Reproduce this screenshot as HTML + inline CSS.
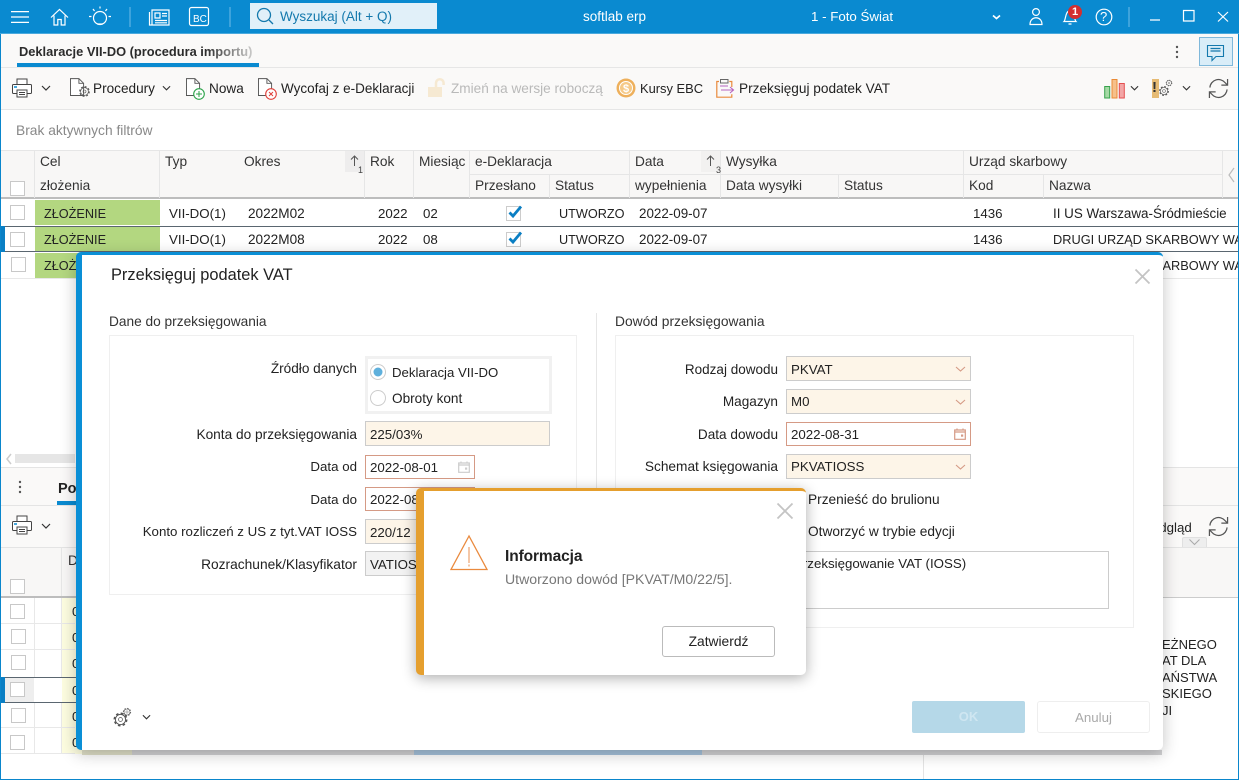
<!DOCTYPE html>
<html lang="pl"><head><meta charset="utf-8"><title>softlab erp</title>
<style>
html,body{margin:0;padding:0;width:1239px;height:780px;overflow:hidden;background:#fff}
body{font-family:"Liberation Sans",Arial,sans-serif;font-size:13.3px;color:#222;position:relative}
.t{position:absolute;white-space:nowrap;line-height:16px;margin-top:1px}
.r{position:absolute;white-space:nowrap;line-height:16px;text-align:right;margin-top:1px;font-size:13.6px}
.m{font-size:13.6px}
.b{position:absolute;box-sizing:border-box}
svg{position:absolute;overflow:visible}
.h{color:#333;font-size:13.7px}
.cb{position:absolute;box-sizing:border-box;width:15px;height:15px;background:#fff;border:1px solid #c8c8c8}
.f{position:absolute;box-sizing:border-box;background:#fdf5e8;border:1px solid #ccc;line-height:23px;padding-left:4px;white-space:nowrap}
.d{background:#fff;border-color:#d59a85}
</style></head><body>
<svg width="0" height="0" style="position:absolute"><defs>
<symbol id="chev" viewBox="0 0 10 6"><path d="M1 1l4 4 4-4" fill="none" stroke="#333" stroke-width="1.2"/></symbol>
<symbol id="printer" viewBox="0 0 20 20"><path d="M5 7V1h10v6" fill="#fff" stroke="#444"/><rect x=".5" y="6.500" width="19" height="9" rx="1" fill="#fff" stroke="#444"/><path d="M2 9h3" stroke="#0a8ad0" stroke-width="1.500"/><path d="M5 12v7h10v-7z" fill="#fff" stroke="#444"/><path d="M7 14.500h6M7 16.500h6" stroke="#444"/></symbol>
<symbol id="doc" viewBox="0 0 16 20"><path d="M.5.500h9l5 5v13H.5z" fill="#fff" stroke="#555"/><path d="M9.500.500v5h5" fill="none" stroke="#555"/></symbol>
<symbol id="gear" viewBox="0 0 20 20"><circle cx="10" cy="10" r="6" fill="none" stroke="#555" stroke-width="1.100"/><circle cx="10" cy="10" r="2.300" fill="none" stroke="#555" stroke-width=".9"/><circle cx="10" cy="10" r="7.300" fill="none" stroke="#555" stroke-width="1.800" stroke-dasharray="3 2.730"/></symbol>
<symbol id="sync" viewBox="0 0 22 22"><path d="M2 10a9 9 0 0 1 16-5l2 2M20 12a9 9 0 0 1-16 5l-2-2" fill="none" stroke="#555" stroke-width="1.300"/><path d="M20.500 1v6.500H14M1.500 21v-6.500H8" fill="none" stroke="#555" stroke-width="1.300"/></symbol>
<symbol id="cal" viewBox="0 0 12 12"><path d="M.7 2h10.600v9.300H.7zM.7 4h10.600M3 .5V2M9 .5V2" fill="none" stroke="currentColor" stroke-width="1.200"/><rect x="7" y="6.500" width="2.200" height="2.200" fill="currentColor"/></symbol>
</defs></svg>

<!-- window frame background -->
<div class="b" style="left:0;top:0;width:1239px;height:780px;border:1px solid #0a86cc;border-top:0"></div>

<!-- top bar -->
<div class="b" style="left:0;top:0;width:1239px;height:34px;background:#0a8ad0"></div>
<div class="b" style="left:0;top:33px;width:1239px;height:1px;background:#4aa9dd"></div>
<svg style="left:0;top:0" width="1239" height="34" fill="none" stroke="#fff" stroke-width="1.200">
<path d="M11 11.600h18M11 17h18M11 22.400h18"/>
<path d="M51 17.500l8.500-8 8.500 8M54 15.500v9.500h3.800v-5.500h3.400v5.500h3.800v-9.500"/>
<circle cx="100" cy="18" r="6.500"/><path d="M97 24h6M89 16.500h2.500M108.500 16.500h2.500M93 9l1.500 2M107 9l-1.500 2M100 6.500v2" />
<path d="M130 7v20M230 7v20" stroke="#3da3dc" stroke-width="2"/>
<path d="M152 10h17v15h-17zM149.500 12v13h3"/><path d="M155 13h5v5h-5zM162 13.500h5M162 16h5M155 20.500h12M155 22.800h12"/>
<rect x="189.500" y="7.500" width="19" height="18" rx="2"/>
<path d="M993 15.500l3.500 3 3.500-3" stroke-width="1.700"/>
<circle cx="1036" cy="12" r="3.400"/><path d="M1030 24.500c0-9 12-9 12 0z"/>
<path d="M1064 21.500c2-2 1-10 6-11 5 1 4 9 6 11zM1068.500 24h3"/>
<circle cx="1104" cy="17" r="7.800"/>
<path d="M1129 7v20" stroke="#3da3dc" stroke-width="2"/>
<path d="M1150 20h10M1183.500 10.500h10.500v10.500h-10.500zM1218 12l10 9.500M1228 12l-10 9.500"/>
</svg>
<div class="t" style="left:1100px;top:8px;color:#fff;font-size:13px">?</div>
<div class="t" style="left:193px;top:11px;color:#fff;font-size:10px">BC</div>
<div class="b" style="left:250px;top:3px;width:187px;height:26px;background:#e1f0f9"></div>
<svg style="left:0;top:0" width="300" height="34" fill="none" stroke="#1479ad" stroke-width="1.300"><circle cx="264" cy="15" r="6.500"/><path d="M269 20l4 4"/></svg>
<div class="t" style="left:280px;top:8px;color:#1479ad;font-size:13.500px">Wyszukaj (Alt + Q)</div>
<div class="t" style="left:583px;top:8px;color:#fff;font-size:13.500px">softlab erp</div>
<div class="t" style="left:811px;top:8px;color:#fff;font-size:13.300px">1 - Foto Świat</div>
<div class="b" style="left:1068px;top:5px;width:14px;height:14px;border-radius:50%;background:#d32f2f;color:#fff;font-weight:bold;font-size:11px;line-height:14px;text-align:center">1</div>

<!-- tab bar -->
<div class="b" style="left:1px;top:34px;width:1237px;height:76px;background:#faf9f8"></div>
<div class="t" style="left:19px;top:43px;width:240px;overflow:hidden;font-weight:bold;font-size:12.850px;color:#2b2b2b">Deklaracje VII-DO (procedura importu)</div>
<div class="b" style="left:205px;top:40px;width:55px;height:22px;background:linear-gradient(90deg,rgba(250,249,248,0),rgba(250,249,248,.85) 95%)"></div>
<div class="b" style="left:17px;top:63px;width:242px;height:4px;background:#0a8ad0"></div>
<div class="b" style="left:1px;top:67px;width:1237px;height:1px;background:#e6e6e6"></div>
<svg style="left:1172px;top:44px" width="10" height="16" fill="#555"><circle cx="5" cy="3" r="1.200"/><circle cx="5" cy="8" r="1.200"/><circle cx="5" cy="13" r="1.200"/></svg>
<div class="b" style="left:1199px;top:37px;width:34px;height:29px;background:#d9edf8;border:1px solid #7fb8da"></div>
<svg style="left:1207px;top:45px" width="18" height="17" fill="none" stroke="#1479ad" stroke-width="1.100"><path d="M.5.500h16v11H9l-4 4v-4H.5z"/><path d="M3.500 3.500h10M3.500 6h10" stroke-width="1.300"/></svg>

<!-- toolbar -->
<svg style="left:12px;top:78px" width="20" height="20"><use href="#printer"/></svg>
<svg style="left:41px;top:85px" width="10" height="6"><use href="#chev"/></svg>
<svg style="left:70px;top:78px" width="15" height="19"><use href="#doc"/></svg>
<svg style="left:78px;top:85px" width="13" height="13"><use href="#gear"/></svg>
<div class="t m" style="left:93px;top:80px">Procedury</div>
<svg style="left:162px;top:85px" width="9" height="6"><use href="#chev"/></svg>
<svg style="left:186px;top:78px" width="15" height="19"><use href="#doc"/></svg>
<svg style="left:193px;top:88px" width="12" height="12"><circle cx="6" cy="6" r="5.300" fill="#fff" stroke="#2ca34a" stroke-width="1.100"/><path d="M6 3v6M3 6h6" stroke="#2ca34a"/></svg>
<div class="t m" style="left:209px;top:80px">Nowa</div>
<svg style="left:258px;top:78px" width="15" height="19"><use href="#doc"/></svg>
<svg style="left:265px;top:88px" width="12" height="12"><circle cx="6" cy="6" r="5.300" fill="#fff" stroke="#e0403a" stroke-width="1.100"/><path d="M4 4l4 4M8 4l-4 4" stroke="#e0403a"/></svg>
<div class="t" style="left:281px;top:80px;font-size:13.500px">Wycofaj z e-Deklaracji</div>
<svg style="left:427px;top:78px" width="19" height="20"><rect x="1" y="9" width="14" height="10" fill="#f6e9d2"/><path d="M9 9V5a3.800 3.800 0 0 1 7.600 0v2" fill="none" stroke="#f6e9d2" stroke-width="2.500"/></svg>
<div class="t m" style="left:451px;top:80px;color:#b9b9b9">Zmień na wersje roboczą</div>
<svg style="left:616px;top:78px" width="20" height="20"><circle cx="10" cy="10" r="9.500" fill="#eeb05c"/><circle cx="10" cy="10" r="6.500" fill="#f6c987" stroke="#fff"/></svg>
<div class="t" style="left:623px;top:80px;color:#fff;font-size:11px;font-weight:bold">$</div>
<div class="t" style="left:640px;top:80px;font-size:12.900px">Kursy EBC</div>
<svg style="left:716px;top:78px" width="19" height="20" fill="none"><path d="M3 3.500H.8v15.700h15v-3M15.800 9V3.500h-2.500" stroke="#e98a3c" stroke-width="1.200"/><path d="M4.500 1.500h7.500v3.500H4.500z" stroke="#666"/><path d="M5 12h12M14 9l3.500 3-3.500 3" stroke="#b765bf" stroke-width="1.100"/><path d="M4 8h8" stroke="#b765bf"/></svg>
<div class="t m" style="left:739px;top:80px;font-size:13.650px">Przeksięguj podatek VAT</div>
<svg style="left:1104px;top:79px" width="22" height="20"><rect x=".7" y="7.500" width="5" height="11.500" fill="#a5d9a5" stroke="#37a24d"/><rect x="8" y=".5" width="5" height="18.500" fill="#f6c08a" stroke="#ea8a35"/><rect x="15.300" y="4.500" width="5" height="14.500" fill="#f3a6a6" stroke="#e45050"/></svg>
<svg style="left:1130px;top:85px" width="9" height="6"><use href="#chev"/></svg>
<div class="b" style="left:1152px;top:79px;width:7px;height:19px;background:#e6bb74"></div>
<div class="t" style="left:1152px;top:79px;font-weight:bold;font-size:15px;color:#333">!</div>
<svg style="left:1158px;top:85px" width="12" height="12"><use href="#gear"/></svg>
<svg style="left:1165px;top:79px" width="8" height="8"><use href="#gear"/></svg>
<svg style="left:1182px;top:85px" width="9" height="6"><use href="#chev"/></svg>
<svg style="left:1208px;top:78px" width="21" height="21"><use href="#sync"/></svg>

<!-- filter -->
<div class="b" style="left:1px;top:109px;width:1237px;height:1px;background:#e6e6e6"></div>
<div class="t" style="left:16px;top:122px;color:#888;font-size:13.800px">Brak aktywnych filtrów</div>

<!-- grid header -->
<div class="b" style="left:1px;top:150px;width:1237px;height:49px;background:#f8f7f6;border-top:1px solid #e6e6e6;border-bottom:2px solid #bdbdbd"></div>
<svg style="left:0;top:150px" width="1239" height="48" stroke="#e6e6e6"><path d="M34.500 0v48M159.500 0v48M364.500 0v48M413.500 0v48M469.500 0v48M549.500 24v24M629.500 0v48M720.500 0v48M838.500 24v24M963.500 0v48M1043.500 24v24M1222.500 0v48M469 24.500h160M629 24.500h92M721 24.500h243M964 24.500h258"/><rect x="345" y="1" width="19" height="21" fill="#eeeded" stroke="none"/><rect x="701" y="1" width="19" height="21" fill="#f2f1f0" stroke="none"/><path d="M354.500 16V6M351 9.500l3.500-3.500 3.500 3.500M710.500 16V6M707 9.500l3.500-3.500 3.500 3.500" fill="none" stroke="#555"/><path d="M1234 18l-5 7 5 7" fill="none" stroke="#bbb" stroke-width="1.200"/></svg>
<div class="t" style="left:358px;top:161px;font-size:9px;color:#444">1</div>
<div class="t" style="left:716px;top:161px;font-size:9px;color:#444">3</div>
<div class="cb" style="left:10px;top:181px"></div>
<div class="t h" style="left:40px;top:153px">Cel</div>
<div class="t h" style="left:40px;top:177px">złożenia</div>
<div class="t h" style="left:165px;top:153px">Typ</div>
<div class="t h" style="left:244px;top:153px">Okres</div>
<div class="t h" style="left:370px;top:153px">Rok</div>
<div class="t h" style="left:419px;top:153px;width:49px;overflow:hidden">Miesiąc</div>
<div class="t h" style="left:475px;top:153px">e-Deklaracja</div>
<div class="t h" style="left:475px;top:177px">Przesłano</div>
<div class="t h" style="left:555px;top:177px">Status</div>
<div class="t h" style="left:635px;top:153px">Data</div>
<div class="t h" style="left:635px;top:177px">wypełnienia</div>
<div class="t h" style="left:726px;top:153px">Wysyłka</div>
<div class="t h" style="left:726px;top:177px">Data wysyłki</div>
<div class="t h" style="left:844px;top:177px">Status</div>
<div class="t h" style="left:969px;top:153px">Urząd skarbowy</div>
<div class="t h" style="left:969px;top:177px">Kod</div>
<div class="t h" style="left:1049px;top:177px">Nazwa</div>

<!-- rows -->
<div class="b" style="left:35px;top:200px;width:125px;height:25px;background:#b3d780"></div>
<div class="b" style="left:35px;top:227px;width:125px;height:24px;background:#b3d780"></div>
<div class="b" style="left:35px;top:253px;width:125px;height:25px;background:#b3d780"></div>
<div class="b" style="left:1px;top:226px;width:1237px;height:1px;background:#5a6670"></div>
<div class="b" style="left:1px;top:251px;width:1237px;height:1px;background:#5a6670"></div>
<div class="b" style="left:1px;top:226px;width:4px;height:26px;background:#0a7fc4"></div>
<div class="b" style="left:1px;top:278px;width:1237px;height:1px;background:#e8e8e8"></div>
<div class="cb" style="left:10px;top:205px"></div><div class="cb" style="left:10px;top:232px"></div><div class="cb" style="left:11px;top:257px"></div>
<div class="t" style="left:44px;top:205px;font-size:12.700px">ZŁOŻENIE</div><div class="t" style="left:44px;top:231px;font-size:12.700px">ZŁOŻENIE</div><div class="t" style="left:44px;top:257px;font-size:12.700px">ZŁOŻENIE</div>
<div class="t" style="left:169px;top:205px">VII-DO(1)</div><div class="t" style="left:169px;top:231px">VII-DO(1)</div>
<div class="t m" style="left:248px;top:205px">2022M02</div><div class="t m" style="left:248px;top:231px">2022M08</div>
<div class="t" style="left:378px;top:205px">2022</div><div class="t" style="left:378px;top:231px">2022</div>
<div class="t" style="left:423px;top:205px">02</div><div class="t" style="left:423px;top:231px">08</div>
<svg style="left:505px;top:204px" width="18" height="18"><rect x="1.500" y="2.500" width="14" height="14" fill="#fff" stroke="#ccc"/><path d="M4.500 8.500l3.500 3.500 8-9.500" fill="none" stroke="#0a7fc4" stroke-width="2.800"/></svg>
<svg style="left:505px;top:230px" width="18" height="18"><rect x="1.500" y="2.500" width="14" height="14" fill="#fff" stroke="#ccc"/><path d="M4.500 8.500l3.500 3.500 8-9.500" fill="none" stroke="#0a7fc4" stroke-width="2.800"/></svg>
<div class="t" style="left:559px;top:205px;width:65px;overflow:hidden;font-size:12.700px">UTWORZONA</div><div class="t" style="left:559px;top:231px;width:65px;overflow:hidden;font-size:12.700px">UTWORZONA</div>
<div class="t" style="left:639px;top:205px;font-size:13.400px">2022-09-07</div><div class="t" style="left:639px;top:231px;font-size:13.400px">2022-09-07</div>
<div class="t" style="left:973px;top:205px">1436</div><div class="t" style="left:973px;top:231px">1436</div>
<div class="t" style="left:1053px;top:205px;font-size:13.400px">II US Warszawa-Śródmieście</div>
<div class="t" style="left:1053px;top:231px;width:185px;overflow:hidden;font-size:12.800px">DRUGI URZĄD SKARBOWY WARSZAWA</div>
<div class="t" style="left:1053px;top:257px;width:185px;overflow:hidden;font-size:12.800px">DRUGI URZĄD SKARBOWY WARSZAWA</div>

<!-- lower panel -->
<div class="b" style="left:15px;top:454px;width:60px;height:9px;background:#e6e6e6"></div>
<svg style="left:5px;top:453px" width="8" height="12"><path d="M6 1L2 6l4 5" fill="none" stroke="#ccc" stroke-width="1.500"/></svg>
<div class="b" style="left:1px;top:467px;width:1237px;height:80px;background:#faf9f8;border-top:1px solid #e4e4e4"></div>
<div class="b" style="left:1px;top:505px;width:1237px;height:1px;background:#e4e4e4"></div>
<div class="b" style="left:1px;top:547px;width:1237px;height:1px;background:#e4e4e4"></div>
<svg style="left:15px;top:479px" width="10" height="16" fill="#555"><circle cx="5" cy="3" r="1.200"/><circle cx="5" cy="8" r="1.200"/><circle cx="5" cy="13" r="1.200"/></svg>
<div class="t" style="left:58px;top:480px;font-weight:bold;font-size:14.500px">Pozycje</div>
<div class="b" style="left:57px;top:501px;width:100px;height:4px;background:#0a8ad0"></div>
<svg style="left:12px;top:515px" width="20" height="20"><use href="#printer"/></svg>
<svg style="left:41px;top:523px" width="10" height="6"><use href="#chev"/></svg>
<div class="t" style="left:1143px;top:519px;font-size:13.300px">Podgląd</div>
<svg style="left:1208px;top:516px" width="21" height="21"><use href="#sync"/></svg>
<div class="b" style="left:1182px;top:537px;width:25px;height:10px;background:#eeeeee;border:1px solid #e0e0e0;border-bottom:0;border-radius:2px 2px 0 0"></div>
<svg style="left:1189px;top:539px" width="11" height="6"><path d="M.5.500l5 5 5-5" fill="none" stroke="#aaa"/></svg>
<div class="b" style="left:1px;top:548px;width:1237px;height:49px;background:#f8f7f6"></div>
<div class="b" style="left:1px;top:596px;width:80px;height:2px;background:#bdbdbd"></div>
<div class="b" style="left:1163px;top:597px;width:75px;height:1px;background:#ccc"></div>
<div class="cb" style="left:10px;top:579px"></div>
<div class="t h" style="left:68px;top:552px">Data</div>
<div class="b" style="left:61px;top:548px;width:1px;height:48px;background:#e6e6e6"></div>
<div class="b" style="left:62px;top:598px;width:70px;height:156px;background:#fdfde0"></div>
<svg style="left:0;top:598px" width="80" height="158" stroke="#e8e8e8"><path d="M1 25.500h74M1 51.500h74M1 129.500h74M1 155.500h74M34.500 0v156M61.500 0v156"/></svg>
<div class="b" style="left:5px;top:678px;width:29px;height:24px;background:#eeeeee"></div>
<div class="b" style="left:34px;top:678px;width:28px;height:24px;background:#fff"></div>
<div class="b" style="left:1px;top:677px;width:75px;height:1px;background:#5a6670"></div>
<div class="b" style="left:1px;top:702px;width:75px;height:1px;background:#5a6670"></div>
<div class="b" style="left:1px;top:677px;width:4px;height:26px;background:#0a7fc4"></div>
<div class="cb" style="left:10px;top:604px"></div><div class="cb" style="left:11px;top:629px"></div><div class="cb" style="left:11px;top:655px"></div><div class="cb" style="left:10px;top:682px"></div><div class="cb" style="left:11px;top:708px"></div><div class="cb" style="left:10px;top:735px"></div>
<div class="t" style="left:72px;top:603px">0</div><div class="t" style="left:72px;top:629px">0</div><div class="t" style="left:72px;top:655px">0</div><div class="t" style="left:72px;top:682px">0</div><div class="t" style="left:72px;top:708px">0</div><div class="t" style="left:72px;top:734px">0</div>
<div class="b" style="left:82px;top:750px;width:1080px;height:5px;background:#d2d2d4"></div>
<div class="b" style="left:82px;top:750px;width:50px;height:5px;background:#e0e0c8"></div>
<div class="b" style="left:414px;top:750px;width:288px;height:5px;background:#a6c3dc"></div>
<div class="b" style="left:923px;top:755px;width:1px;height:24px;background:#e4e4e4"></div>
<div class="t" style="left:1162px;top:636px;font-size:13px">EŻNEGO</div>
<div class="t" style="left:1162px;top:652px;font-size:13px">AT DLA</div>
<div class="t" style="left:1162px;top:669px;font-size:13px">AŃSTWA</div>
<div class="t" style="left:1162px;top:685px;font-size:13px">SKIEGO</div>
<div class="t" style="left:1162px;top:702px;font-size:13px">JI</div>

<!-- main dialog -->
<div class="b" style="left:76px;top:252px;width:1087px;height:498px;background:#fff;border-left:6px solid #0a8fd6;border-top:3px solid #0a8fd6;border-radius:5px;box-shadow:0 4px 16px rgba(0,0,0,.24)"></div>
<div class="t" style="left:111px;top:266px;font-size:16.400px;color:#222">Przeksięguj podatek VAT</div>
<svg style="left:1135px;top:269px" width="15" height="15"><path d="M.5.500l14 14M14.500.500l-14 14" stroke="#c4c4c4" stroke-width="1.800"/></svg>
<div class="t" style="left:109px;top:313px;font-size:13.700px;color:#333">Dane do przeksięgowania</div>
<div class="t" style="left:615px;top:313px;font-size:13.800px;color:#333">Dowód przeksięgowania</div>
<div class="b" style="left:109px;top:335px;width:468px;height:260px;border:1px solid #efefef"></div>
<div class="b" style="left:596px;top:313px;width:1px;height:360px;background:#e6e6e6"></div>
<div class="b" style="left:615px;top:335px;width:519px;height:293px;border:1px solid #efefef"></div>

<div class="r" style="right:882px;top:360px">Źródło danych</div>
<div class="r" style="right:882px;top:426px;font-size:13.700px">Konta do przeksięgowania</div>
<div class="r" style="right:882px;top:458px;font-size:13.300px">Data od</div>
<div class="r" style="right:882px;top:491px;font-size:13.300px">Data do</div>
<div class="r" style="right:882px;top:523px;font-size:13.300px">Konto rozliczeń z US z tyt.VAT IOSS</div>
<div class="r" style="right:882px;top:556px;font-size:13.750px">Rozrachunek/Klasyfikator</div>
<div class="b" style="left:365px;top:356px;width:187px;height:58px;border:3px solid #f1f1f1"></div>
<svg style="left:369px;top:362px" width="18" height="46"><circle cx="9" cy="10" r="7.500" fill="#fff" stroke="#ccc"/><circle cx="9" cy="10" r="4.500" fill="#5fb0dc"/><circle cx="9" cy="36" r="7.500" fill="#fff" stroke="#ccc"/></svg>
<div class="t" style="left:392px;top:364px;font-size:13.200px">Deklaracja VII-DO</div>
<div class="t m" style="left:392px;top:390px">Obroty kont</div>
<div class="f" style="left:365px;top:421px;width:185px;height:25px;line-height:25px">225/03%</div>
<div class="f d" style="left:365px;top:455px;width:110px;height:24px">2022-08-01</div>
<svg style="left:458px;top:461px;color:#ccc" width="12" height="12"><use href="#cal"/></svg>
<div class="f d" style="left:365px;top:487px;width:110px;height:24px">2022-08-31</div>
<div class="f" style="left:365px;top:519px;width:185px;height:25px;line-height:25px">220/12</div>
<div class="f" style="left:365px;top:551px;width:185px;height:25px;line-height:25px;background:#f2f2f2">VATIOSS</div>

<div class="r" style="right:461px;top:361px;font-size:13.500px">Rodzaj dowodu</div>
<div class="r" style="right:461px;top:393px">Magazyn</div>
<div class="r" style="right:461px;top:426px">Data dowodu</div>
<div class="r" style="right:461px;top:458px;font-size:13.700px">Schemat księgowania</div>
<div class="f" style="left:786px;top:356px;width:185px;height:25px;line-height:25px">PKVAT</div>
<div class="f" style="left:786px;top:389px;width:185px;height:25px">M0</div>
<div class="f d" style="left:786px;top:422px;width:185px;height:24px">2022-08-31</div>
<div class="f" style="left:786px;top:454px;width:185px;height:25px">PKVATIOSS</div>
<svg style="left:955px;top:366px" width="11" height="6"><path d="M1 1l4.500 4L10 1" fill="none" stroke="#d59a85" stroke-width="1.100"/></svg>
<svg style="left:955px;top:399px" width="11" height="6"><path d="M1 1l4.500 4L10 1" fill="none" stroke="#d59a85" stroke-width="1.100"/></svg>
<svg style="left:955px;top:464px" width="11" height="6"><path d="M1 1l4.500 4L10 1" fill="none" stroke="#d59a85" stroke-width="1.100"/></svg>
<svg style="left:954px;top:428px;color:#d59a85" width="12" height="12"><use href="#cal"/></svg>
<div class="t" style="left:808px;top:491px;font-size:13.700px">Przenieść do brulionu</div>
<div class="t" style="left:808px;top:523px;font-size:13.700px">Otworzyć w trybie edycji</div>
<div class="b" style="left:760px;top:551px;width:349px;height:58px;border:1px solid #ccc"></div>
<div class="t" style="left:794px;top:555px">Przeksięgowanie VAT (IOSS)</div>
<svg style="left:112px;top:711px" width="17" height="17"><use href="#gear"/></svg>
<svg style="left:122px;top:707px" width="10" height="10"><use href="#gear"/></svg>
<svg style="left:142px;top:714px" width="9" height="6"><use href="#chev"/></svg>
<div class="b" style="left:912px;top:701px;width:113px;height:32px;background:#b5d8e8;border-radius:2px;color:#cfe6f1;font-weight:bold;font-size:13px;line-height:32px;text-align:center">OK</div>
<div class="b" style="left:1037px;top:701px;width:113px;height:32px;background:#fff;border:1px solid #eee;border-radius:3px;color:#aaa;line-height:31px;text-align:center">Anuluj</div>

<!-- info dialog -->
<div class="b" style="left:416px;top:488px;width:390px;height:187px;background:#fff;border-left:8px solid #e59f2e;border-top:3px solid #e59f2e;border-radius:5px;box-shadow:0 3px 14px rgba(0,0,0,.32)"></div>
<svg style="left:777px;top:503px" width="16" height="16"><path d="M.5.500l15 15M15.500.500l-15 15" stroke="#c4c4c4" stroke-width="1.800"/></svg>
<svg style="left:450px;top:535px" width="38" height="36" fill="none"><path d="M19 1L1 34.500h36z" stroke="#ea8a3e" stroke-width="1.300"/><path d="M19 12v16" stroke="#f0b48a" stroke-width="1.500"/><path d="M19 29.500v2" stroke="#f0b48a" stroke-width="1.500"/></svg>
<div class="t" style="left:505px;top:548px;font-size:15.500px;font-weight:bold;color:#222;letter-spacing:-.1px">Informacja</div>
<div class="t" style="left:505px;top:570px;color:#777;font-size:14.100px">Utworzono dowód [PKVAT/M0/22/5].</div>
<div class="b" style="left:662px;top:626px;width:113px;height:31px;background:#fff;border:1px solid #bbb;border-radius:3px;line-height:30px;text-align:center;font-size:13.800px">Zatwierdź</div>
</body></html>
